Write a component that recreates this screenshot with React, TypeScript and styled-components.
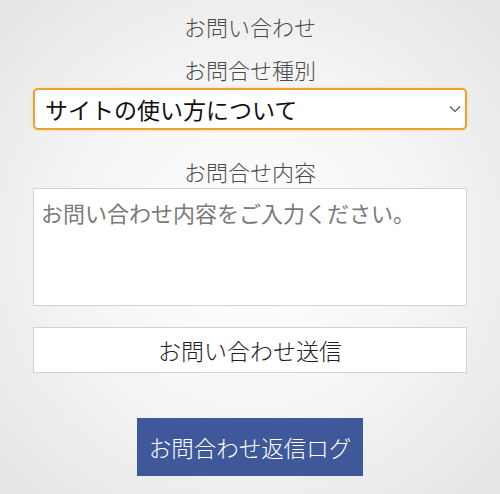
import styled, { createGlobalStyle } from 'styled-components';

const GlobalStyle = createGlobalStyle`
  html, body {
    margin: 0;
    padding: 0;
  }
  body {
    min-height: 494px;
    background: radial-gradient(ellipse at 50% 50%, #ffffff 0%, #f6f6f6 45%, #e5e5e5 100%);
    font-family: "Noto Sans CJK JP", "Noto Sans", sans-serif;
  }
`;

const Page = styled.main`
  width: 434px;
  margin: 0 auto;
  padding-top: 10px;
  display: flex;
  flex-direction: column;
  align-items: center;
`;

const Title = styled.h1`
  margin: 0;
  font-size: 22px;
  font-weight: 300;
  line-height: 32px;
  color: #4a4a4a;
`;

const Label = styled.label<{ $top: number }>`
  display: block;
  margin-top: ${({ $top }) => $top}px;
  font-size: 22px;
  font-weight: 300;
  line-height: 30px;
  color: #4a4a4a;
  text-align: center;
`;

const SelectWrap = styled.div`
  position: relative;
  width: 100%;
  margin-top: 4px;
`;

const Select = styled.select`
  appearance: none;
  width: 100%;
  height: 42px;
  box-sizing: border-box;
  padding: 0 30px 0 10px;
  border: 2px solid #e6a334;
  border-radius: 5px;
  box-shadow: 0 0 2px 1px #f7e3b5;
  background: #fff;
  font-family: inherit;
  font-size: 23px;
  color: #111;
  outline: none;
`;

const Chevron = styled.svg`
  position: absolute;
  right: 6px;
  top: 17px;
  pointer-events: none;
`;

const TextArea = styled.textarea`
  width: 100%;
  height: 118px;
  box-sizing: border-box;
  margin-top: 2px;
  padding: 8px 7px;
  border: 1px solid #d2d2d2;
  background: #fff;
  resize: none;
  font-family: inherit;
  font-size: 22px;
  line-height: 30px;
  color: #333;
  outline: none;

  &::placeholder {
    color: #7a7a7a;
  }
`;

const SubmitButton = styled.button`
  width: 100%;
  height: 46px;
  margin-top: 21px;
  border: 1px solid #d2d2d2;
  background: #fff;
  font-family: inherit;
  font-size: 23px;
  font-weight: 300;
  color: #222;
  cursor: pointer;
`;

const LogButton = styled.button`
  margin-top: 45px;
  width: 226px;
  height: 58px;
  border: none;
  background: #3f5899;
  color: #fff;
  font-family: inherit;
  font-size: 22.5px;
  font-weight: 300;
  cursor: pointer;
`;

const App = () => (
  <>
    <GlobalStyle />
    <Page>
      <Title>お問い合わせ</Title>
      <Label htmlFor="kind" $top={12}>お問合せ種別</Label>
      <SelectWrap>
        <Select id="kind" defaultValue="site">
          <option value="site">サイトの使い方について</option>
          <option value="other">その他</option>
        </Select>
        <Chevron width="12" height="8" viewBox="0 0 12 8" aria-hidden="true">
          <path d="M1 1.5l5 5 5-5" fill="none" stroke="#555" strokeWidth="1.2" />
        </Chevron>
      </SelectWrap>
      <Label htmlFor="body" $top={26}>お問合せ内容</Label>
      <TextArea id="body" placeholder="お問い合わせ内容をご入力ください。" />
      <SubmitButton type="button">お問い合わせ送信</SubmitButton>
      <LogButton type="button">お問合わせ返信ログ</LogButton>
    </Page>
  </>
);

export default App;
